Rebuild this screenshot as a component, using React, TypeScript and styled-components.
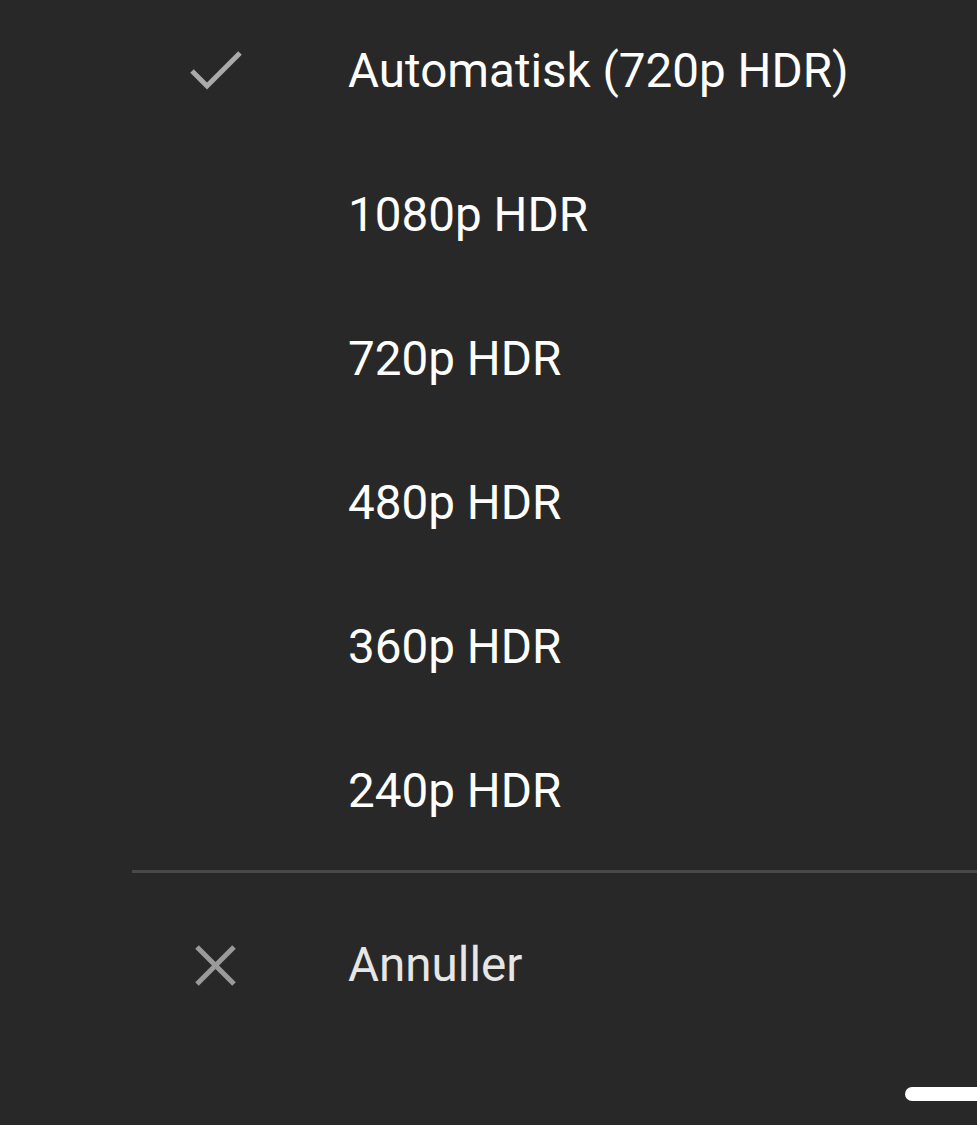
import React from "react";
import styled, { createGlobalStyle } from "styled-components";

const Global = createGlobalStyle`
  html, body { margin: 0; padding: 0; background: #282828; overflow: hidden; }
  #root { width: 977px; height: 1125px; }
`;

const Sheet = styled.div`
  width: 977px;
  height: 1125px;
  background: #282828;
  display: flex;
  flex-direction: column;
  font-family: Roboto, "Noto Sans", sans-serif;
  overflow: hidden;
`;

const List = styled.div`
  display: flex;
  flex-direction: column;
`;

const Row = styled.div<{ $dim?: boolean }>`
  height: 144px;
  display: flex;
  align-items: center;
  color: ${(p) => (p.$dim ? "#e6e6e6" : "#ffffff")};
  font-size: 47.6px;
  font-weight: 400;
`;

const IconCell = styled.div`
  width: 348px;
  flex-shrink: 0;
  display: flex;
  justify-content: flex-start;
  padding-left: 188px;
  box-sizing: border-box;
  align-items: center;
`;

const Label = styled.span`
  line-height: 1;
`;

const Divider = styled.div`
  margin-left: 132px;
  margin-top: 6px;
  height: 3px;
  background: #494949;
`;

const CancelRow = styled(Row)`
  margin-top: 21px;
`;

const Footer = styled.div`
  flex: 1;
  display: flex;
  justify-content: flex-end;
  align-items: flex-start;
  padding-top: 49px;
`;

const HomeBar = styled.div`
  width: 72px;
  height: 14px;
  background: #ffffff;
  border-radius: 7px 0 0 7px;
`;

const Check = () => (
  <svg width="58" height="44" viewBox="0 0 58 44" style={{ display: "block" }}>
    <polyline
      points="4,21 19,36 52,3"
      fill="none"
      stroke="#aaaaaa"
      strokeWidth="5"
      strokeLinecap="butt"
      strokeLinejoin="miter"
    />
  </svg>
);

const Cross = () => (
  <svg width="46" height="46" viewBox="0 0 46 46" style={{ display: "block", marginLeft: "4px" }}>
    <path d="M5 4 L42 41 M42 4 L5 41" stroke="#9a9a9a" strokeWidth="5" fill="none" />
  </svg>
);

const options = [
  "Automatisk (720p HDR)",
  "1080p HDR",
  "720p HDR",
  "480p HDR",
  "360p HDR",
  "240p HDR",
];

export default function App() {
  return (
    <>
      <Global />
      <Sheet>
        <List>
          {options.map((o, i) => (
            <Row key={o}>
              <IconCell>{i === 0 ? <Check /> : null}</IconCell>
              <Label>{o}</Label>
            </Row>
          ))}
        </List>
        <Divider />
        <CancelRow $dim>
          <IconCell>
            <Cross />
          </IconCell>
          <Label>Annuller</Label>
        </CancelRow>
        <Footer>
          <HomeBar />
        </Footer>
      </Sheet>
    </>
  );
}
